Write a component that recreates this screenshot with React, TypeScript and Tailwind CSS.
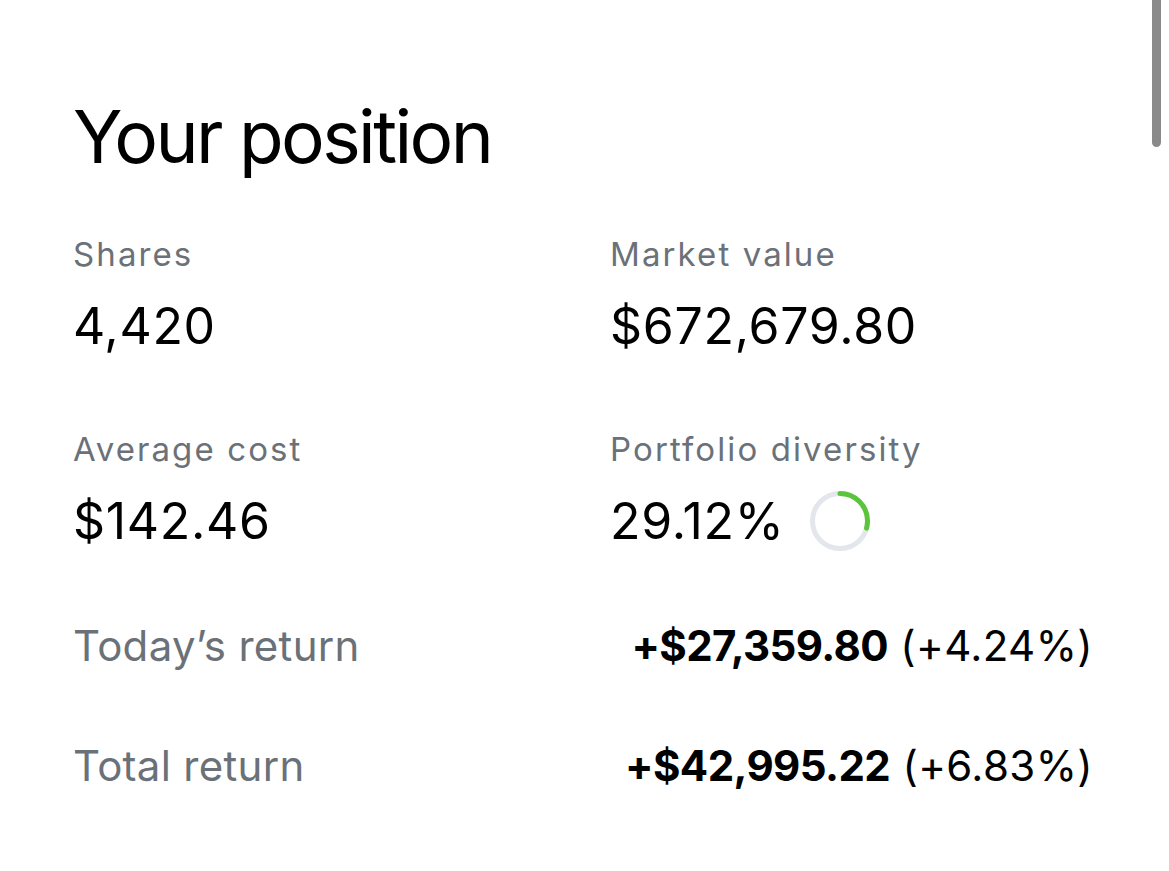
import React from 'react'

const FONT = { fontFamily: 'Inter, "Liberation Sans", Arial, sans-serif' }

type Stat = { label: string; value: string; ring?: number }

const STATS: Stat[] = [
  { label: 'Shares', value: '4,420' },
  { label: 'Market value', value: '$672,679.80' },
  { label: 'Average cost', value: '$142.46' },
  { label: 'Portfolio diversity', value: '29.12%', ring: 29.12 },
]

const RETURNS = [
  { label: 'Today’s return', amount: '+$27,359.80', pct: '(+4.24%)' },
  { label: 'Total return', amount: '+$42,995.22', pct: '(+6.83%)' },
]

function Ring({ percent }: { percent: number }) {
  const r = 27.5
  const c = 2 * Math.PI * r
  const dash = (percent / 100) * c
  return (
    <svg width="60" height="60" viewBox="0 0 60 60" className="shrink-0">
      <circle cx="30" cy="30" r={r} fill="none" stroke="#e3e6ea" strokeWidth="5" />
      <circle
        cx="30"
        cy="30"
        r={r}
        fill="none"
        stroke="#5ac53b"
        strokeWidth="5"
        strokeLinecap="round"
        strokeDasharray={`${dash} ${c}`}
        transform="rotate(-90 30 30)"
      />
    </svg>
  )
}

export default function App() {
  return (
    <div className="relative w-[1169px] h-[871px] bg-white overflow-hidden text-black" style={FONT}>
      {/* scroll indicator */}
      <div className="absolute top-[-6px] right-[8px] w-[9px] h-[153px] rounded-full bg-[#8a8a8a]" />

      <div className="pl-[73px] pr-[76px] pt-[100px]">
        <h1 className="text-[73px] leading-[73px] tracking-[-2.6px] font-normal">Your position</h1>

        <div className="mt-[61px] grid grid-cols-[537px_1fr] gap-y-[73px]">
          {STATS.map((s) => (
            <div key={s.label} className="flex flex-col gap-[22px]">
              <div className="text-[33px] leading-[40px] tracking-[2.1px] text-[#6b7178]">{s.label}</div>
              <div className="flex items-center gap-[26px] h-[60px]">
                <span className="text-[50px] leading-[60px] tracking-[0.7px]">{s.value}</span>
                {s.ring !== undefined && <Ring percent={s.ring} />}
              </div>
            </div>
          ))}
        </div>

        <div className="mt-[70px] flex flex-col gap-[70px]">
          {RETURNS.map((r) => (
            <div key={r.label} className="flex items-center justify-between h-[50px]">
              <span className="text-[42px] leading-[50px] tracking-[0.3px] text-[#6b7178]">{r.label}</span>
              <span className="text-[42px] leading-[50px] tracking-[0.4px]">
                <span className="font-bold tracking-[-0.6px]">{r.amount}</span> {r.pct}
              </span>
            </div>
          ))}
        </div>
      </div>
    </div>
  )
}
